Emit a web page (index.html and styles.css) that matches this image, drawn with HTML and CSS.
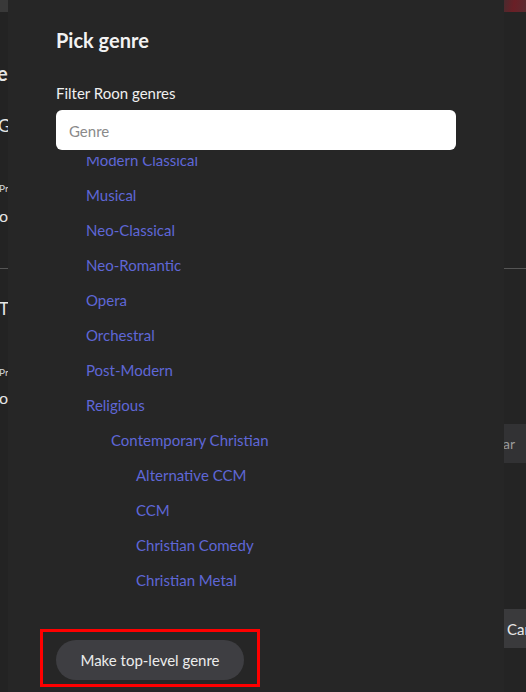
FILE: index.html
```html
<!DOCTYPE html>
<html>
<head>
<meta charset="utf-8">
<link rel="stylesheet" href="styles.css">
</head>
<body>
<div class="app">
  <div class="edge edge-left">
    <div class="thumb thumb-gray"></div>
    <div class="bg-title">ee</div>
    <div class="bg-sub">Gen</div>
    <div class="bg-small">Pre</div>
    <div class="bg-text">ok</div>
    <div class="bg-rule"></div>
    <div class="bg-sub bg-t">Tr</div>
    <div class="bg-small bg-small2">Pre</div>
    <div class="bg-text">ok</div>
  </div>
  <div class="bg-center"></div>
  <div class="edge edge-right">
    <div class="thumb thumb-red"></div>
    <div class="bg-rule bg-rule-r"></div>
    <div class="bg-btn bg-btn-clear"><span>Clear</span></div>
    <div class="bg-btn bg-btn-cancel"><span>Cancel</span></div>
  </div>
</div>

<div class="modal">
  <h1 class="modal-title">Pick genre</h1>
  <label class="field-label" for="genre">Filter Roon genres</label>
  <input id="genre" class="field-input" type="text" placeholder="Genre">
  <div class="genre-list">
    <ul class="genre-items">
      <li class="lvl1">Modern Classical</li>
      <li class="lvl1">Musical</li>
      <li class="lvl1">Neo-Classical</li>
      <li class="lvl1">Neo-Romantic</li>
      <li class="lvl1">Opera</li>
      <li class="lvl1">Orchestral</li>
      <li class="lvl1">Post-Modern</li>
      <li class="lvl1">Religious</li>
      <li class="lvl2">Contemporary Christian</li>
      <li class="lvl3">Alternative CCM</li>
      <li class="lvl3">CCM</li>
      <li class="lvl3">Christian Comedy</li>
      <li class="lvl3">Christian Metal</li>
    </ul>
  </div>
  <div class="modal-footer">
    <div class="highlight">
      <button class="pill-btn" type="button">Make top-level genre</button>
    </div>
  </div>
</div>
</body>
</html>
```

FILE: styles.css
```css
* { box-sizing: border-box; }
html, body {
  margin: 0;
  padding: 0;
  width: 526px;
  height: 692px;
  overflow: hidden;
  background: #232323;
  font-family: Lato, "Open Sans", sans-serif;
}

/* background app (mostly covered by the modal) */
.app {
  display: flex;
  width: 526px;
  height: 692px;
}
.edge {
  overflow: hidden;
  color: #e6e6e6;
  white-space: nowrap;
}
.edge-left { width: 8px; background: #232323; }
.bg-center { flex: 1; }
.edge-right { width: 22px; background: #242424; }

.thumb { height: 12px; }
.thumb-gray { background: #393939; width: 100px; }
.thumb-red {
  background: linear-gradient(100deg, #4a2a2e 0%, #6a1f26 45%, #5a2a30 100%);
}

.bg-title {
  margin-top: 49px;
  font-size: 20px;
  font-weight: 700;
  line-height: 24px;
  margin-left: -3px;
}
.bg-sub {
  margin-top: 31px;
  font-size: 17px;
  line-height: 20px;
  margin-left: -2px;
}
.bg-small {
  margin-top: 46px;
  font-size: 10px;
  line-height: 12px;
  color: #d6d6d6;
  margin-left: -1px;
}
.bg-small2 { margin-top: 47px; }
.bg-text {
  margin-top: 12px;
  font-size: 16px;
  line-height: 20px;
  margin-left: -1px;
}
.bg-small2 + .bg-text { margin-top: 10px; }
.bg-rule {
  margin-top: 42px;
  height: 1px;
  background: #555;
  width: 200px;
}
.bg-t { margin-top: 30px; margin-left: -1px; }
.bg-rule-r { margin-top: 256px; }

.bg-btn {
  height: 39px;
  display: flex;
  align-items: center;
  font-size: 14px;
}
.bg-btn-clear {
  margin-top: 155px;
  background: #323234;
  color: #9a9a9a;
}
.bg-btn-clear span { margin-left: -21px; }
.bg-btn-cancel {
  margin-top: 146px;
  background: #3a3a3c;
  color: #e8e8e8;
  font-size: 15px;
}
.bg-btn-cancel span { margin-left: 3px; }

/* modal overlay */
.modal {
  position: absolute;
  left: 8px;
  top: 0;
  width: 496px;
  height: 692px;
  background: #262626;
  padding: 28px 48px 5px 48px;
  display: flex;
  flex-direction: column;
}
.modal-title {
  margin: 0;
  font-size: 20px;
  line-height: 24px;
  font-weight: 700;
  color: #f2f2f2;
}
.field-label {
  display: block;
  margin-top: 32px;
  font-size: 15px;
  line-height: 18px;
  color: #f0f0f0;
}
.field-input {
  display: block;
  margin-top: 8px;
  width: 400px;
  height: 40px;
  border: none;
  border-radius: 6px;
  background: #ffffff;
  padding: 2px 13px 0 13px;
  font-family: Lato, "Open Sans", sans-serif;
  font-size: 15px;
  color: #333;
  outline: none;
}
.field-input::placeholder { color: #8a8a8a; }

.genre-list {
  flex: 1;
  overflow: hidden;
  margin-top: 7px;
}
.genre-items {
  list-style: none;
  margin: -14px 0 0 0;
  padding: 0;
}
.genre-items li {
  font-size: 15px;
  line-height: 35px;
  color: #5f67d6;
  white-space: nowrap;
}
.genre-items .lvl1 { padding-left: 30px; }
.genre-items .lvl2 { padding-left: 55px; }
.genre-items .lvl3 { padding-left: 80px; }

.modal-footer {
  margin-left: -16px;
  display: flex;
}
.highlight {
  border: 3px solid #ff0000;
  padding: 8px 13px 4px 13px;
}
.pill-btn {
  display: block;
  height: 40px;
  width: 188px;
  border: none;
  border-radius: 20px;
  background: #3e3e42;
  color: #ececec;
  font-family: Lato, "Open Sans", sans-serif;
  font-size: 15px;
  padding: 0;
  cursor: pointer;
}
```
